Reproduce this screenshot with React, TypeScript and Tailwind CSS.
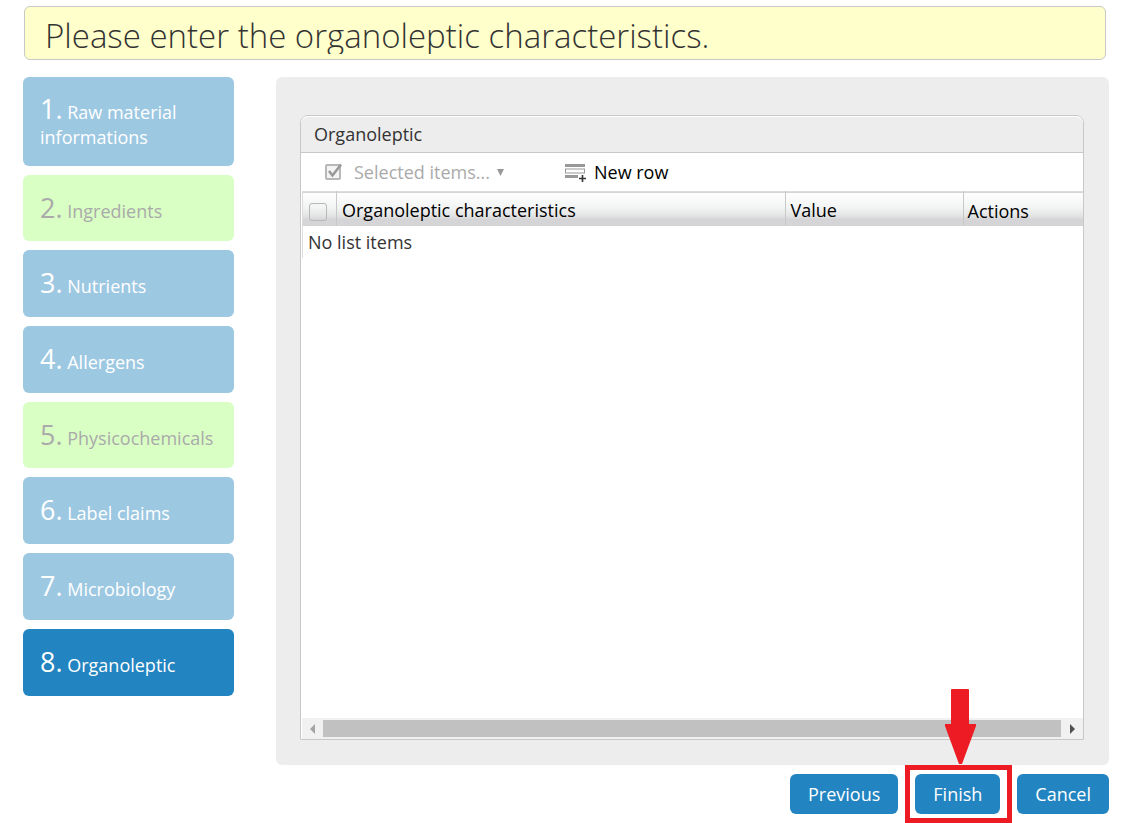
import React from "react";

type Step = { label: string; state: "done" | "optional" | "current" };

const steps: Step[] = [
  { label: "Raw material informations", state: "done" },
  { label: "Ingredients", state: "optional" },
  { label: "Nutrients", state: "done" },
  { label: "Allergens", state: "done" },
  { label: "Physicochemicals", state: "optional" },
  { label: "Label claims", state: "done" },
  { label: "Microbiology", state: "done" },
  { label: "Organoleptic", state: "current" },
];

const stepStyles = {
  done: "min-h-[67px] bg-[#9dc8e2] text-white",
  optional: "min-h-[66px] bg-[#d9ffc4] text-[#aaaaaa]",
  current: "min-h-[67px] bg-[#2284c0] text-white",
};

const buttonClass =
  "h-10 rounded-md bg-[#2284c0] px-[18px] text-lg leading-6 text-white";

function StepList() {
  return (
    <nav className="flex w-[211px] shrink-0 flex-col gap-[9px]">
      {steps.map((step, i) => (
        <button
          key={step.label}
          type="button"
          aria-current={step.state === "current" ? "step" : undefined}
          className={`rounded-md pt-4 pr-4 pb-[17px] pl-[17px] text-left text-lg leading-6 ${stepStyles[step.state]}`}
        >
          <span className="text-[27px] leading-8">{`${i + 1}.`}</span> {step.label}
        </button>
      ))}
    </nav>
  );
}

function Toolbar() {
  return (
    <div className="flex h-[38px] items-center pl-6 text-lg leading-6">
      <button type="button" disabled className="flex items-center text-[#aaaaaa]">
        <svg width="18" height="18" viewBox="0 0 18 18" fill="none" className="mr-[11px]">
          <rect x="1" y="2" width="14" height="14" rx="1" fill="#f4f4f4" stroke="#b8b8b8" strokeWidth="2" />
          <path d="M4 8l3.5 4.5L16 1.5" stroke="#999999" strokeWidth="2.6" />
        </svg>
        Selected items...
        <svg width="7" height="7" viewBox="0 0 7 7" className="ml-[7px]">
          <path d="M0 0h7L3.5 7z" fill="#999999" />
        </svg>
      </button>
      <button type="button" className="ml-[61px] flex items-center text-black">
        <svg width="22" height="19" viewBox="0 0 22 19" className="mr-[7px]">
          <path d="M0 1h20v3H0zM0 12h13v3H0z" fill="#999999" />
          <rect x="0.5" y="6" width="19" height="4" fill="#ffffff" stroke="#999999" />
          <path d="M17.5 12v7M14 15.5h7" stroke="#333333" strokeWidth="1.6" />
        </svg>
        New row
      </button>
    </div>
  );
}

function CharacteristicsTable() {
  return (
    <div className="min-h-[527px] pl-px">
      <table className="w-full table-fixed border-collapse text-left text-lg leading-6">
        <thead>
          <tr className="h-[34px] border-t border-[#dcdcdc] bg-[linear-gradient(to_bottom,#ffffff_0%,#f2f3f3_45%,#e2e3e3_70%,#d5d5d7_80%,#d5d5d7_100%)] text-black">
            <th className="w-[34px] border-l border-l-[#dddddd] p-0 pt-[6px]">
              <input
                type="checkbox"
                aria-label="Select all rows"
                className="ml-[6px] block size-[18px] appearance-none rounded-[3px] border border-[#b8b8b8] bg-transparent"
              />
            </th>
            <th className="border-l border-l-[#c8c8c8] p-0 pt-[2px] pl-[5px] font-normal">
              Organoleptic characteristics
            </th>
            <th className="w-[178px] border-l border-l-[#c8c8c8] p-0 pt-[2px] pl-[5px] font-normal">Value</th>
            <th className="w-[120px] border-l border-l-[#c8c8c8] p-0 pt-1 pl-1 font-normal">Actions</th>
          </tr>
        </thead>
        <tbody>
          <tr className="h-8 text-[#333333]">
            <td colSpan={4} className="border-l border-[#dddddd] p-0 pl-[5px]">
              No list items
            </td>
          </tr>
        </tbody>
      </table>
    </div>
  );
}

function ScrollBar() {
  return (
    <div className="ml-px flex h-[21px] items-center bg-[#f1f1f1]">
      <button type="button" aria-label="Scroll left" className="flex w-[21px] justify-center">
        <svg width="5" height="10" viewBox="0 0 5 10">
          <path d="M5 0v10L0 5z" fill="#a3a3a3" />
        </svg>
      </button>
      <div className="h-[17px] flex-1 bg-[#c1c1c1]" />
      <button type="button" aria-label="Scroll right" className="flex w-[22px] justify-center">
        <svg width="5" height="10" viewBox="0 0 5 10">
          <path d="M0 0v10l5-5z" fill="#505050" />
        </svg>
      </button>
    </div>
  );
}

export default function App() {
  return (
    <div className="bg-white pt-[6px] pr-[29px] pb-[9px] pl-[23px] font-['Open_Sans','Noto_Sans',sans-serif]">
      <header className="mr-[3px] ml-px h-[54px] rounded-md border border-[#c8c8c8] bg-[#ffffcc] px-5 pt-[5px]">
        <h1 className="h-[42px] overflow-hidden text-[33px] leading-[48px] font-light whitespace-nowrap text-[#333333]">
          Please enter the organoleptic characteristics.
        </h1>
      </header>

      <div className="mt-[17px] flex items-start gap-[42px]">
        <StepList />

        <main className="min-w-0 flex-1">
          <div className="rounded-md bg-[#ededed] pt-[38px] pr-[25px] pb-[25px] pl-6">
            <section className="rounded-t-lg border border-[#c8c8c8] bg-white">
              <h2 className="h-[37px] rounded-t-[7px] border-t border-b border-t-white border-b-[#c8c8c8] bg-[#ededed] pl-[13px] text-lg leading-[35px] text-[#333333]">
                Organoleptic
              </h2>
              <Toolbar />
              <CharacteristicsTable />
              <ScrollBar />
            </section>
          </div>

          <div className="mt-[9px] flex justify-end">
            <button type="button" className={buttonClass}>Previous</button>
            <div className="relative mx-[17px]">
              <button type="button" className={buttonClass}>Finish</button>
              {/* Highlight frame and pointer */}
              <div className="pointer-events-none absolute -top-[9px] -right-3 -bottom-[9px] -left-[10px] border-[5px] border-[#ed1c24]" />
              <svg width="31" height="76" viewBox="0 0 31 76" className="pointer-events-none absolute -top-[85px] left-[30px]">
                <path d="M7 0h16q1 0 1 1v34h7v2L17 75h-3L0 37v-2h6V1q0-1 1-1z" fill="#ed1c24" />
              </svg>
            </div>
            <button type="button" className={buttonClass}>Cancel</button>
          </div>
        </main>
      </div>
    </div>
  );
}
